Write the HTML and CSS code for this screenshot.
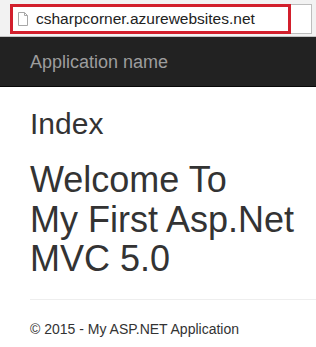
FILE: index.html
```
<!DOCTYPE html>
<html lang="en">
<head>
    <meta charset="UTF-8">
    <title>Index - My ASP.NET Application</title>
    <link rel="stylesheet" href="styles.css">
</head>
<body>
    <!-- browser address bar -->
    <div class="chrome">
        <div class="omnibox">
            <div class="highlight">
                <svg class="page-icon" width="10" height="14" viewBox="0 0 10 14">
                    <path d="M0.5 0.5 H6.5 L9.5 3.5 V13.5 H0.5 Z" fill="#fff" stroke="#a8a8a8"/>
                    <path d="M6.5 0.5 V3.5 H9.5" fill="none" stroke="#a8a8a8"/>
                </svg>
                <span class="url">csharpcorner.azurewebsites.net</span>
            </div>
        </div>
    </div>

    <div class="navbar">
        <a href="#" class="navbar-brand">Application name</a>
    </div>

    <div class="body-content">
        <h2>Index</h2>
        <h1>Welcome To<br>My First Asp.Net<br>MVC 5.0</h1>
        <hr>
        <footer>
            <p>&copy; 2015 - My ASP.NET Application</p>
        </footer>
    </div>
</body>
</html>
```

FILE: styles.css
```
* {
    box-sizing: border-box;
}

body {
    margin: 0;
    font-family: "Liberation Sans", Arial, sans-serif;
    font-size: 14px;
    line-height: 1.42857;
    color: #333;
    background: #fff;
    overflow: hidden;
}

/* address bar */
.chrome {
    height: 37px;
    padding: 4px 4px 2px 10px;
    background: #f2f2f2;
    border-bottom: 1px solid #c4c4c4;
}

.omnibox {
    height: 30px;
    display: flex;
    background: #fff;
    border: 1px solid #bdbdbd;
    border-left: 0;
}

.highlight {
    width: 281px;
    height: 30px;
    margin-top: -1px;
    border: 3px solid #d21f2c;
    display: flex;
    align-items: center;
    padding-left: 5px;
}

.page-icon {
    flex: none;
    margin-right: 8px;
}

.url {
    font-size: 15.5px;
    color: #222;
    white-space: nowrap;
}

/* navbar */
.navbar {
    height: 50px;
    background: #222;
    border-bottom: 1px solid #080808;
}

.navbar-brand {
    display: block;
    padding: 15px 30px;
    font-size: 18px;
    line-height: 20px;
    color: #9d9d9d;
    text-decoration: none;
}

/* content */
.body-content {
    padding-left: 30px;
}

h1, h2 {
    font-weight: normal;
    line-height: 1.1;
    margin: 20px 0 10px;
}

h2 {
    font-size: 30px;
}

h1 {
    font-size: 36px;
}

hr {
    margin: 20px 0;
    border: 0;
    border-top: 1px solid #eee;
}

footer p {
    margin: 0 0 10px;
}
```
